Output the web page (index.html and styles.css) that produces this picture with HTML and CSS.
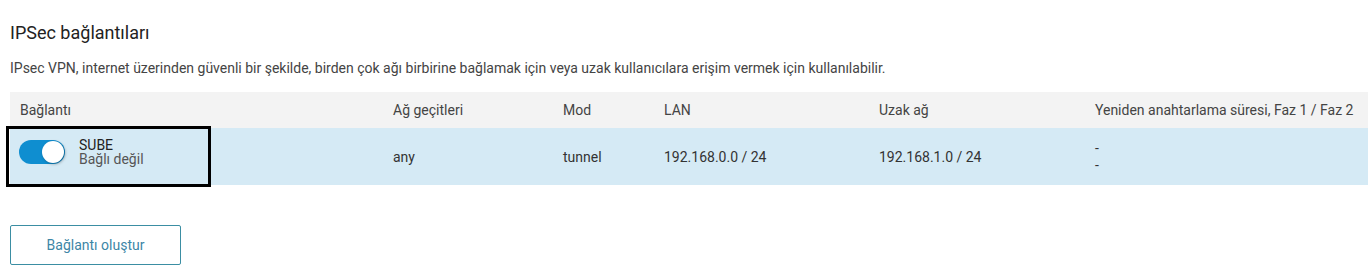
FILE: index.html
```html
<!DOCTYPE html>
<html lang="tr">
<head>
    <meta charset="UTF-8">
    <title>IPSec bağlantıları</title>
    <link rel="stylesheet" href="styles.css">
</head>
<body>
    <div class="page">
        <h1>IPSec bağlantıları</h1>
        <p class="desc">IPsec VPN, internet üzerinden güvenli bir şekilde, birden çok ağı birbirine bağlamak için veya uzak kullanıcılara erişim vermek için kullanılabilir.</p>

        <div class="table">
            <div class="row head">
                <div class="cell">Bağlantı</div>
                <div class="cell">Ağ geçitleri</div>
                <div class="cell">Mod</div>
                <div class="cell">LAN</div>
                <div class="cell">Uzak ağ</div>
                <div class="cell">Yeniden anahtarlama süresi, Faz 1 / Faz 2</div>
            </div>
            <div class="row item">
                <div class="cell conn">
                    <span class="toggle on"><span class="knob"></span></span>
                    <div class="name">
                        <span class="title">SUBE</span>
                        <span class="status">Bağlı değil</span>
                    </div>
                    <span class="mark"></span>
                </div>
                <div class="cell">any</div>
                <div class="cell">tunnel</div>
                <div class="cell">192.168.0.0 / 24</div>
                <div class="cell">192.168.1.0 / 24</div>
                <div class="cell rekey">
                    <span>-</span>
                    <span>-</span>
                </div>
            </div>
        </div>

        <button class="create">Bağlantı oluştur</button>
    </div>
</body>
</html>
```

FILE: styles.css
```css
* {
    margin: 0;
    padding: 0;
    box-sizing: border-box;
}

body {
    font-family: Roboto, "Liberation Sans", sans-serif;
    color: #333;
    background: #fff;
}

.page {
    padding: 21px 0 0 10px;
}

h1 {
    font-size: 18px;
    font-weight: 400;
    line-height: 24px;
    color: #222;
}

.desc {
    margin-top: 14px;
    font-size: 14px;
    line-height: 18px;
    color: #444;
}

.table {
    margin-top: 15px;
}

.row {
    display: grid;
    grid-template-columns: 373px 170px 101px 215px 216px 1fr;
    align-items: center;
    font-size: 14px;
}

.head {
    height: 36px;
    background: #f3f3f3;
    color: #444;
}

.item {
    height: 57px;
    background: #d5eaf5;
    color: #333;
}

.cell {
    padding-left: 10px;
    white-space: nowrap;
}

.conn {
    position: relative;
    display: flex;
    align-items: center;
    gap: 14px;
    padding-left: 9px;
    padding-bottom: 10px;
    height: 100%;
}

.toggle {
    position: relative;
    width: 46px;
    height: 24px;
    border-radius: 12px;
    background: #ccc;
    flex-shrink: 0;
}

.toggle.on {
    background: #0f8ed0;
}

.knob {
    position: absolute;
    top: 1px;
    left: 1px;
    width: 22px;
    height: 22px;
    border-radius: 50%;
    background: #fff;
    box-shadow: 1px 1px 3px rgba(0, 0, 0, 0.35);
}

.toggle.on .knob {
    left: 23px;
}

.name {
    display: flex;
    flex-direction: column;
    line-height: 14px;
    color: #222;
}

.status {
    color: #555;
}

/* annotation frame drawn around the first cell */
.mark {
    position: absolute;
    left: -4px;
    top: -2px;
    width: 205px;
    height: 61px;
    border: 3px solid #000;
}

.rekey {
    display: flex;
    flex-direction: column;
    line-height: 17px;
}

.create {
    margin-top: 40px;
    width: 171px;
    height: 40px;
    background: #fff;
    border: 1px solid #3b8ea3;
    border-radius: 2px;
    font-family: Roboto, "Liberation Sans", sans-serif;
    font-size: 14px;
    color: #3d86a6;
    cursor: pointer;
}
```
